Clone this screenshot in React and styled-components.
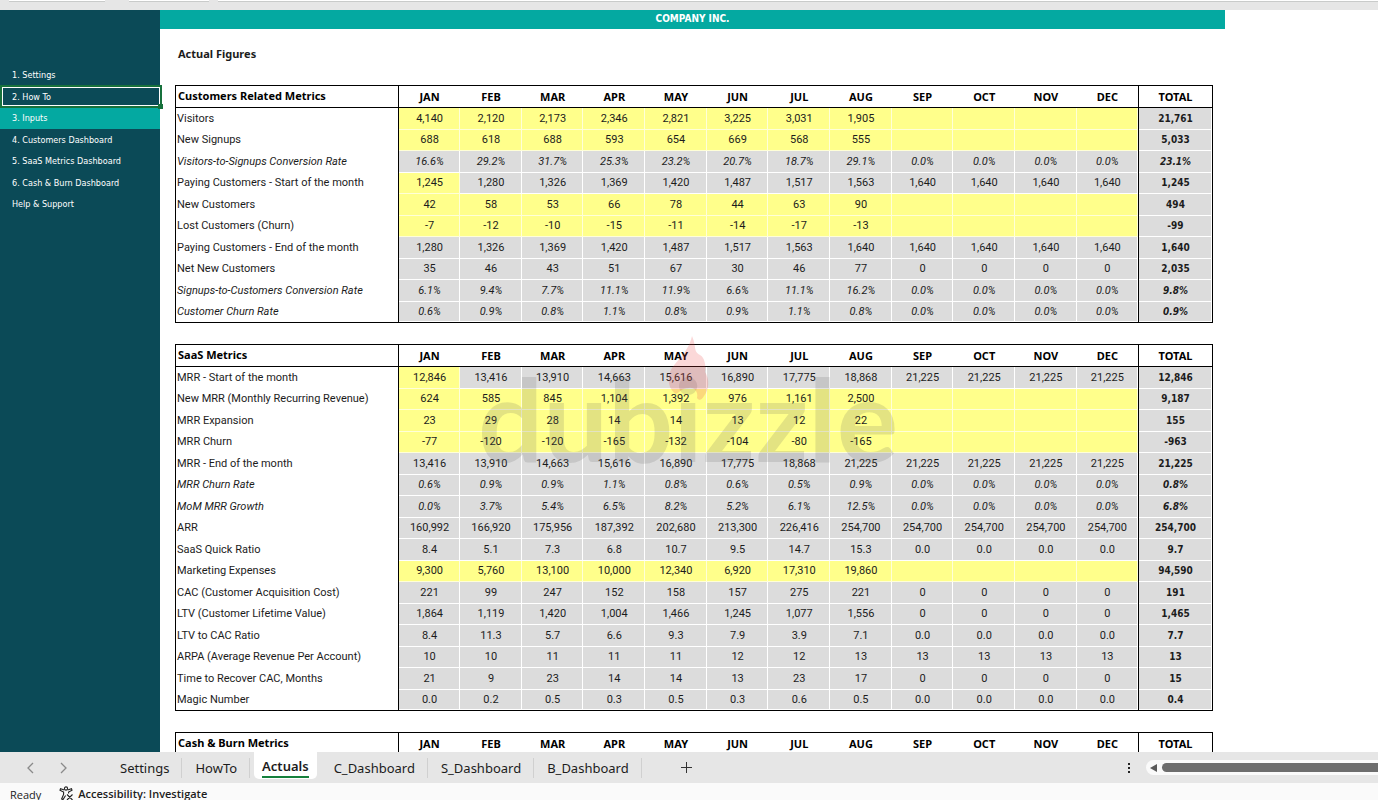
import React from "react";
import styled, { createGlobalStyle, css } from "styled-components";

const Global = createGlobalStyle`
  * { box-sizing: border-box; }
  html, body { margin: 0; }
  body { font-family: "DejaVu Sans Condensed", "DejaVu Sans", sans-serif; font-size: 10px; color: #1c1c1c; background: #fff; }
  a { color: inherit; text-decoration: none; }
  button { font: inherit; color: inherit; border: 0; background: none; padding: 0; }
`;

const YELLOW = "#ffff8b";
const GREY = "#dcdcdc";
const HEAD_FONT = `"Noto Sans", sans-serif`;
const BODY_FONT = `Roboto, sans-serif`;

const Workbook = styled.div`
  height: 100vh;
  display: flex;
  flex-direction: column;
  overflow: hidden;
`;

const FormulaBarEdge = styled.div`
  flex: none;
  height: 10px;
  background: #e6e6e6;
  display: flex;
  padding-left: 9px;
`;

const BarBox = styled.div`
  height: 2px;
  width: ${(p) => p.$width || "auto"};
  flex: ${(p) => (p.$width ? "none" : "1")};
  margin-right: ${(p) => p.$gap || 0};
  background: #fff;
  border-bottom: 1px solid #c9cbca;
`;

const Sheet = styled.div`
  flex: 1;
  min-height: 0;
  display: flex;
  overflow: hidden;
`;

const Sidebar = styled.nav`
  flex: none;
  width: 160px;
  background: #0b4a57;
  padding-top: 54px;
`;

const NavList = styled.ul`
  list-style: none;
  margin: 0;
  padding: 0;
`;

const NavItem = styled.li`
  position: relative;
  height: 22px;
  &:nth-child(even) { height: 21px; }
  font-size: 9px;
  line-height: 22px;
  color: #fff;
  background: ${(p) => (p.$current ? "#04a9a1" : "transparent")};
  a { display: block; padding-left: 12px; }
`;

const CellCursor = styled.span`
  position: absolute;
  inset: -1px -2px -1px 0;
  border: 2px solid #17713c;
  outline: 1px solid #fff;
  outline-offset: -3px;
  pointer-events: none;
  z-index: 2;
  &::after {
    content: "";
    position: absolute;
    right: -3px;
    bottom: -3px;
    width: 5px;
    height: 5px;
    background: #17713c;
  }
`;

const Main = styled.main`
  flex: 1;
  min-width: 0;
  padding-right: 153px;
`;

const Banner = styled.header`
  height: 19px;
  line-height: 18px;
  background: #04a9a1;
  color: #fff;
  font-weight: 700;
  text-align: center;
`;

const Content = styled.div`
  position: relative;
  padding: 15px 12px 0 15px;
`;

const Title = styled.h1`
  margin: 0 0 21px;
  padding-left: 3px;
  height: 20px;
  line-height: 20px;
  font-family: ${HEAD_FONT};
  font-size: 11px;
  font-weight: 700;
`;

const Metrics = styled.table`
  width: 100%;
  table-layout: fixed;
  border-collapse: collapse;
  border: 1px solid #000;
  margin-bottom: 21px;
`;

const LabelCol = styled.col` width: 223px; `;
const TotalCol = styled.col` width: 74px; `;

const HeadRow = styled.tr` height: 22px; `;

const HeadCell = styled.th`
  padding: ${(p) => (p.$label ? "0 0 1px 2px" : "0")};
  text-align: ${(p) => (p.$label ? "left" : "center")};
  font-family: ${HEAD_FONT};
  font-size: 11px;
  line-height: 16px;
  color: #000;
  border-bottom: 1px solid #000;
  ${(p) => p.$label && css`border-right: 1px solid #000;`}
  ${(p) => p.$total && css`border-left: 1px solid #000;`}
`;

const BodyRow = styled.tr`
  height: 22px;
  &:nth-child(even) { height: 21px; }
  font-family: ${BODY_FONT};
  font-size: 11px;
  font-style: ${(p) => (p.$italic ? "italic" : "normal")};
`;

const RowLabel = styled.th`
  padding: 0 0 0 1px;
  text-align: left;
  font-weight: 400;
  line-height: 16px;
  white-space: nowrap;
  border-right: 1px solid #000;
`;

const Cell = styled.td`
  padding: 0;
  text-align: center;
  line-height: 16px;
  background: ${(p) => (p.$input ? YELLOW : GREY)};
  box-shadow: inset -1px -1px ${(p) => (p.$input ? "#ffffd8" : "#fff")};
`;

const TotalCell = styled(Cell)`
  font-family: "DejaVu Sans Condensed", "DejaVu Sans", sans-serif;
  font-size: 10px;
  font-weight: 700;
  border-left: 1px solid #000;
`;

const Watermark = styled.div`
  position: absolute;
  left: 318px;
  top: 307px;
  display: flex;
  pointer-events: none;
`;

const WatermarkWord = styled.span`
  font-family: Lato, sans-serif;
  font-size: 115px;
  line-height: 162px;
  font-weight: 700;
  color: rgba(90, 90, 90, 0.17);
`;

const WatermarkFlame = styled.svg`
  position: absolute;
  left: 188px;
  top: 0;
`;

const TabBar = styled.div`
  flex: none;
  height: 31px;
  background: #e6e6e6;
  display: flex;
  align-items: center;
  font-family: "Noto Sans", sans-serif;
  font-size: 13px;
`;

const Arrows = styled.div`
  width: 107px;
  padding-left: 26px;
  display: flex;
  gap: 24px;
  button { display: flex; }
`;

const Tab = styled.button`
  height: 20px;
  line-height: 20px;
  padding: 0 12px 0 13px;
  border-right: 1px solid #d0d0d0;
`;

const ActiveTab = styled.button`
  align-self: flex-start;
  height: 27px;
  margin: 0 4px;
  padding: 3px 8px 0;
  background: #fff;
  border-radius: 0 0 5px 5px;
  font-weight: 600;
  span { display: block; line-height: 19px; border-bottom: 2px solid #15803c; }
`;

const AddButton = styled.button`
  display: flex;
  margin-left: 38px;
`;

const ScrollArea = styled.div`
  margin-left: auto;
  width: 254px;
  display: flex;
  align-items: center;
  gap: 12px;
`;

const ScrollTrack = styled.div`
  flex: 1;
  height: 15px;
  background: #fafafa;
  border-radius: 8px 0 0 8px;
  display: flex;
  align-items: center;
  padding-left: 4px;
  gap: 5px;
`;

const ScrollThumb = styled.div`
  flex: 1;
  height: 9px;
  background: #6d6d6d;
  border-radius: 5px 0 0 5px;
`;

const StatusBar = styled.footer`
  flex: none;
  height: 17px;
  overflow: hidden;
  background: #fafafa;
  display: flex;
  gap: 18px;
  padding: 4px 0 0 10px;
  font-family: "Open Sans", sans-serif;
  font-size: 11px;
  line-height: 15px;
`;

const Access = styled.button`
  display: flex;
  align-items: center;
  gap: 4px;
  height: 13px;
  line-height: 13px;
  font-weight: 600;
`;

const MONTHS = "JAN FEB MAR APR MAY JUN JUL AUG SEP OCT NOV DEC".split(" ");

const fill = (v, n = 4) => Array(n).fill(v);
const row = (label, values, tail, total, opts = {}) => ({
  label,
  values: [...values.split(" "), ...fill(tail)],
  total,
  ...opts,
});
const INPUT = { input: true };
const RATE = { italic: true };
const START = { firstInput: true };

const CUSTOMERS = [
  row("Visitors", "4,140 2,120 2,173 2,346 2,821 3,225 3,031 1,905", "", "21,761", INPUT),
  row("New Signups", "688 618 688 593 654 669 568 555", "", "5,033", INPUT),
  row("Visitors-to-Signups Conversion Rate", "16.6% 29.2% 31.7% 25.3% 23.2% 20.7% 18.7% 29.1%", "0.0%", "23.1%", RATE),
  row("Paying Customers - Start of the month", "1,245 1,280 1,326 1,369 1,420 1,487 1,517 1,563", "1,640", "1,245", START),
  row("New Customers", "42 58 53 66 78 44 63 90", "", "494", INPUT),
  row("Lost Customers (Churn)", "-7 -12 -10 -15 -11 -14 -17 -13", "", "-99", INPUT),
  row("Paying Customers - End of the month", "1,280 1,326 1,369 1,420 1,487 1,517 1,563 1,640", "1,640", "1,640"),
  row("Net New Customers", "35 46 43 51 67 30 46 77", "0", "2,035"),
  row("Signups-to-Customers Conversion Rate", "6.1% 9.4% 7.7% 11.1% 11.9% 6.6% 11.1% 16.2%", "0.0%", "9.8%", RATE),
  row("Customer Churn Rate", "0.6% 0.9% 0.8% 1.1% 0.8% 0.9% 1.1% 0.8%", "0.0%", "0.9%", RATE),
];

const SAAS = [
  row("MRR - Start of the month", "12,846 13,416 13,910 14,663 15,616 16,890 17,775 18,868", "21,225", "12,846", START),
  row("New MRR (Monthly Recurring Revenue)", "624 585 845 1,104 1,392 976 1,161 2,500", "", "9,187", INPUT),
  row("MRR Expansion", "23 29 28 14 14 13 12 22", "", "155", INPUT),
  row("MRR Churn", "-77 -120 -120 -165 -132 -104 -80 -165", "", "-963", INPUT),
  row("MRR - End of the month", "13,416 13,910 14,663 15,616 16,890 17,775 18,868 21,225", "21,225", "21,225"),
  row("MRR Churn Rate", "0.6% 0.9% 0.9% 1.1% 0.8% 0.6% 0.5% 0.9%", "0.0%", "0.8%", RATE),
  row("MoM MRR Growth", "0.0% 3.7% 5.4% 6.5% 8.2% 5.2% 6.1% 12.5%", "0.0%", "6.8%", RATE),
  row("ARR", "160,992 166,920 175,956 187,392 202,680 213,300 226,416 254,700", "254,700", "254,700"),
  row("SaaS Quick Ratio", "8.4 5.1 7.3 6.8 10.7 9.5 14.7 15.3", "0.0", "9.7"),
  row("Marketing Expenses", "9,300 5,760 13,100 10,000 12,340 6,920 17,310 19,860", "", "94,590", INPUT),
  row("CAC (Customer Acquisition Cost)", "221 99 247 152 158 157 275 221", "0", "191"),
  row("LTV (Customer Lifetime Value)", "1,864 1,119 1,420 1,004 1,466 1,245 1,077 1,556", "0", "1,465"),
  row("LTV to CAC Ratio", "8.4 11.3 5.7 6.6 9.3 7.9 3.9 7.1", "0.0", "7.7"),
  row("ARPA (Average Revenue Per Account)", "10 10 11 11 11 12 12 13", "13", "13"),
  row("Time to Recover CAC, Months", "21 9 23 14 14 13 23 17", "0", "15"),
  row("Magic Number", "0.0 0.2 0.5 0.3 0.5 0.3 0.6 0.5", "0.0", "0.4"),
];

const NAV = [
  "1. Settings",
  "2. How To",
  "3. Inputs",
  "4. Customers Dashboard",
  "5. SaaS Metrics Dashboard",
  "6. Cash & Burn Dashboard",
  "Help & Support",
];

function MetricsTable({ title, rows }) {
  return (
    <Metrics>
      <colgroup>
        <LabelCol />
        {MONTHS.map((m) => <col key={m} />)}
        <TotalCol />
      </colgroup>
      <thead>
        <HeadRow>
          <HeadCell scope="col" $label>{title}</HeadCell>
          {MONTHS.map((m) => <HeadCell scope="col" key={m}>{m}</HeadCell>)}
          <HeadCell scope="col" $total>TOTAL</HeadCell>
        </HeadRow>
      </thead>
      <tbody>
        {rows.map((r) => (
          <BodyRow key={r.label} $italic={r.italic}>
            <RowLabel scope="row">{r.label}</RowLabel>
            {r.values.map((v, i) => (
              <Cell key={i} $input={r.input || (r.firstInput && i === 0)}>{v}</Cell>
            ))}
            <TotalCell>{r.total}</TotalCell>
          </BodyRow>
        ))}
      </tbody>
    </Metrics>
  );
}

const Chevron = ({ d }) => (
  <svg width="9" height="12" viewBox="0 0 9 12" fill="none" stroke="#8a8a8a" strokeWidth="1.3"><path d={d} /></svg>
);

export default function App() {
  return (
    <Workbook>
      <Global />
      <FormulaBarEdge>
        <BarBox $width="96px" $gap="24px" />
        <BarBox $width="80px" $gap="9px" />
        <BarBox />
      </FormulaBarEdge>
      <Sheet>
        <Sidebar>
          <NavList>
            {NAV.map((n) => (
              <NavItem key={n} $current={n === "3. Inputs"}>
                <a href="#sheet">{n}</a>
                {n === "2. How To" && <CellCursor />}
              </NavItem>
            ))}
          </NavList>
        </Sidebar>
        <Main>
          <Banner>COMPANY INC.</Banner>
          <Content>
            <Title>Actual Figures</Title>
            <MetricsTable title="Customers Related Metrics" rows={CUSTOMERS} />
            <MetricsTable title="SaaS Metrics" rows={SAAS} />
            <MetricsTable title="Cash & Burn Metrics" rows={[]} />
            <Watermark>
              <WatermarkWord>dubizzle</WatermarkWord>
              <WatermarkFlame width="44" height="66" viewBox="0 0 44 66">
                <path d="M26 0C31 12 27 15 34 19C39 22 40 30 39 36C43 42 44 52 38 60C36 64 33 65 31 62C33 54 26 51 23 52C16 52 14 56 10 58C3 54 1 44 4 36C8 26 22 18 26 0Z" fill="rgba(235,60,60,0.2)" />
              </WatermarkFlame>
            </Watermark>
          </Content>
        </Main>
      </Sheet>
      <TabBar>
        <Arrows>
          <button aria-label="Previous sheet"><Chevron d="M7 1L2 6L7 11" /></button>
          <button aria-label="Next sheet"><Chevron d="M2 1L7 6L2 11" /></button>
        </Arrows>
        <Tab>Settings</Tab>
        <Tab>HowTo</Tab>
        <ActiveTab><span>Actuals</span></ActiveTab>
        <Tab>C_Dashboard</Tab>
        <Tab>S_Dashboard</Tab>
        <Tab>B_Dashboard</Tab>
        <AddButton aria-label="New sheet">
          <svg width="13" height="13" viewBox="0 0 13 13" stroke="#333" strokeWidth="1"><path d="M6.5 1V12M1 6.5H12" /></svg>
        </AddButton>
        <ScrollArea>
          <svg width="10" height="12" viewBox="0 0 10 12" fill="#222"><rect x="4" y="1" width="2" height="2" /><rect x="4" y="5" width="2" height="2" /><rect x="4" y="9" width="2" height="2" /></svg>
          <ScrollTrack>
            <svg width="7" height="8" viewBox="0 0 7 8" fill="#5a5a5a"><path d="M7 0V8L0 4Z" /></svg>
            <ScrollThumb />
          </ScrollTrack>
        </ScrollArea>
      </TabBar>
      <StatusBar>
        <span>Ready</span>
        <Access>
          <svg width="15" height="15" viewBox="0 0 15 15" fill="none" stroke="#222" strokeWidth="1.1"><circle cx="7" cy="2.5" r="1.6" /><path d="M5.4 4L1.5 2.8L1 4.3L4.6 6V8.5L2.6 13L4 13.6L6.6 9.5M8.6 4L12.5 2.8L13 4.3L9.6 6V7.5M8 8.5L13.5 14M13.5 8.5L8 14" /></svg>
          Accessibility: Investigate
        </Access>
      </StatusBar>
    </Workbook>
  );
}
